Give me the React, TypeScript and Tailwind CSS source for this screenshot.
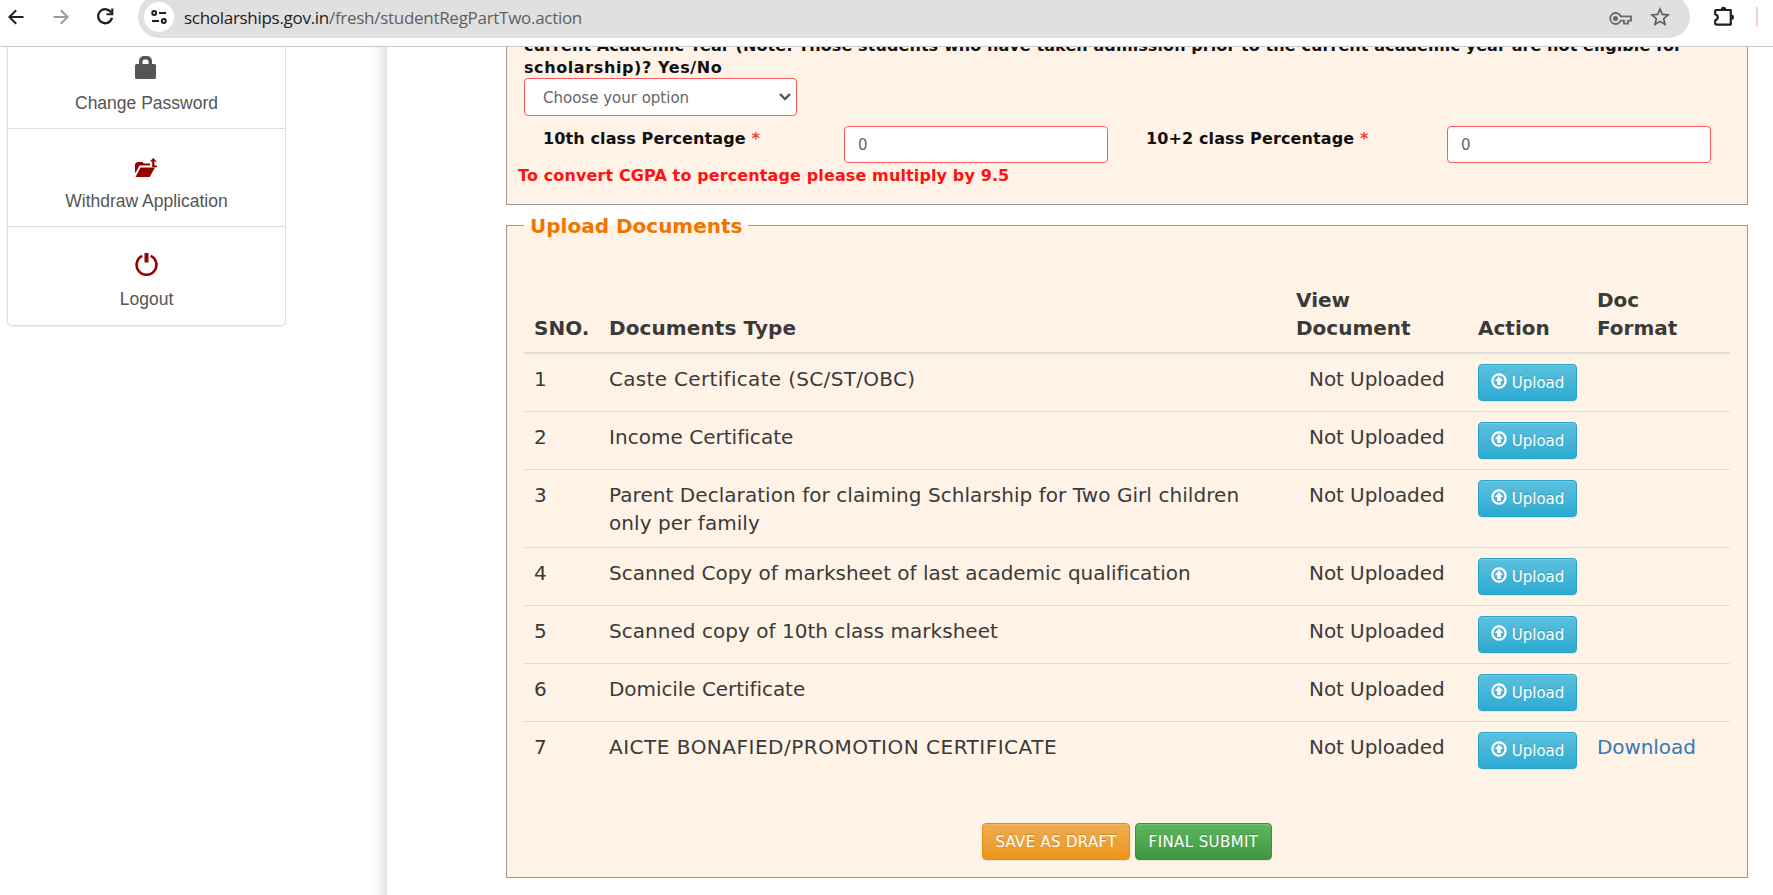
import type { ReactNode } from "react";
import { MdStarBorder } from "react-icons/md";

const documents = [
  { name: "Caste Certificate (SC/ST/OBC)", tracking: "tracking-[0.32px]" },
  { name: "Income Certificate", tracking: "tracking-[0.03px]" },
  {
    name: "Parent Declaration for claiming Schlarship for Two Girl children only per family",
    tracking: "tracking-[0.06px]",
  },
  { name: "Scanned Copy of marksheet of last academic qualification", tracking: "tracking-[-0.02px]" },
  { name: "Scanned copy of 10th class marksheet", tracking: "tracking-[0.03px]" },
  { name: "Domicile Certificate", tracking: "tracking-[-0.06px]" },
  { name: "AICTE BONAFIED/PROMOTION CERTIFICATE", tracking: "tracking-[0.5px]", download: true },
];

function ArrowIcon({ forward }: { forward?: boolean }) {
  return (
    <svg width="16" height="16" viewBox="0 0 16 16" fill="none" stroke={forward ? "#9b9c9e" : "#1f2023"} strokeWidth="2">
      <path d={forward ? "M.5 8h13.500M7.800 1.200L14.600 8l-6.800 6.800" : "M15.500 8H2M8.200 1.200L1.400 8l6.800 6.800"} />
    </svg>
  );
}

function ReloadIcon() {
  return (
    <svg width="17" height="17" viewBox="0 0 17 17" fill="none" stroke="#1f2023" strokeWidth="2.300">
      <path d="M14.300 4.800A7 7 0 1 0 15 9.800" />
      <path d="M15.300.5v5.700H9.500" strokeWidth="2.100" />
    </svg>
  );
}

function TuneIcon() {
  return (
    <svg width="16" height="14" viewBox="0 0 16 14" fill="none" stroke="#1f2023" strokeWidth="2">
      <circle cx="3.2" cy="3" r="2" />
      <path d="M8 3h7M1 11h7" />
      <circle cx="12.8" cy="11" r="2" />
    </svg>
  );
}

function KeyIcon() {
  return (
    <svg width="23" height="13" viewBox="0 0 23 13" fill="none" stroke="#66676a" strokeWidth="1.800">
      <path d="M11.700 4.300A5.500 5.500 0 1 0 11.700 8.700H15V11.700H19V8.700H22V4.300z" strokeLinejoin="round" />
      <circle cx="6.500" cy="6.500" r="2.500" fill="#66676a" stroke="none" />
    </svg>
  );
}

function PuzzleIcon() {
  return (
    <svg width="22" height="22" viewBox="0 0 22 22">
      <path
        d="M3.2 4h14.6v14.6H3.2q-1 0-1-1v-3.4q2.6-.8 2.6-3t-2.600-3V5q0-1 1-1z"
        fill="none"
        stroke="#1f2023"
        strokeWidth="2.2"
        strokeLinejoin="round"
      />
      <path d="M7.800 3.500a2.700 2.700 0 0 1 5.400 0zM18.300 8.600a2.700 2.700 0 0 1 0 5.400z" fill="#1f2023" />
    </svg>
  );
}

function LockIcon() {
  return (
    <svg width="21" height="23" viewBox="0 0 21 23" fill="#555" className="mr-[2px] mb-[2px]">
      <path
        fillRule="evenodd"
        d="M4 8V5.500Q4 0 9.500 0h2Q17 0 17 5.500V8h2.500Q21 8 21 9.500v12q0 1.500-1.500 1.500h-18Q0 23 0 21.500v-12Q0 8 1.500 8zm3.500 0h6V5.500q0-2-2-2h-2q-2 0-2 2z"
      />
    </svg>
  );
}

function FolderIcon() {
  return (
    <svg width="23" height="20" viewBox="0 0 23 20" fill="#900" className="mt-[2px]">
      <path d="M0 15V6L2 4h5.500l1.300 1.500H15v2H4.500L1 14z" />
      <path d="M5.500 9.500H20L14.700 19H.5z" />
      <path d="M18.200 0l3.500 3.600h-2.300v4h2.600v1.700h-4.800V3.600h-2.400z" />
    </svg>
  );
}

function PowerIcon() {
  return (
    <svg width="23" height="23" viewBox="0 0 23 23">
      <path d="M7.300 2.900a9.900 9.900 0 1 0 8.400 0" fill="none" stroke="#900" strokeWidth="2.600" />
      <path d="M9.500 0h4v9.500h-4z" fill="#900" />
    </svg>
  );
}

function UploadIcon() {
  return (
    <svg width="16" height="16" viewBox="0 0 16 16" fill="white" className="shrink-0">
      <circle cx="8" cy="8" r="6.600" fill="none" stroke="white" strokeWidth="2.200" />
      <path d="M8 3.300l4.100 4.700H9.800v4H6.200V8H3.900z" />
    </svg>
  );
}

function SideItem({ icon, label, last }: { icon: ReactNode; label: string; last?: boolean }) {
  return (
    <a
      className={
        last
          ? "flex h-[98px] flex-col items-center pt-[26px]"
          : "flex h-[98px] flex-col items-center border-b border-[#ddd] pt-[26px]"
      }
    >
      <span className="flex h-[23px] items-center">{icon}</span>
      <span className="mt-[13px] text-[17.5px] leading-[20px] text-[#555]">{label}</span>
    </a>
  );
}

const buttonBase =
  "flex h-[37px] items-center justify-center rounded-[4px] border text-[15px] text-white [text-shadow:0_-1px_0_rgba(0,0,0,.2)] shadow-[inset_0_1px_0_rgba(255,255,255,.15),0_1px_1px_rgba(0,0,0,.075)]";

function UploadButton() {
  return (
    <button className={`${buttonBase} w-[99px] gap-[5px] border-[#28a4c9] bg-linear-to-b from-[#5bc0de] to-[#2aabd2]`}>
      <span className="pb-[3px]">
        <UploadIcon />
      </span>
      <span className="pt-[1px]">Upload</span>
    </button>
  );
}

function Percentage({ label }: { label: string }) {
  return (
    <div className="flex">
      <div className="w-[301px] pt-[1px] text-[16px] leading-[23px] font-bold tracking-[0.12px]">
        {label} <span className="text-[#f44336]">*</span>
      </div>
      <div className="flex h-[37px] w-[264px] items-center rounded-[4px] border border-[#ff5a5a] bg-white px-[13px] pt-[2px] text-[15px] text-[#666]">
        0
      </div>
    </div>
  );
}

export default function App() {
  return (
    <div className="flex h-[895px] w-[1773px] flex-col overflow-hidden bg-white font-['DejaVu_Sans',sans-serif]">
      <header className="flex h-[47px] shrink-0 items-start overflow-hidden border-b border-[#c8c8c8] bg-white">
        <div className="flex w-[138px] shrink-0 items-center pt-[8px] pl-[8px]">
          <ArrowIcon />
          <span className="ml-[29px]">
            <ArrowIcon forward />
          </span>
          <span className="ml-[28px]">
            <ReloadIcon />
          </span>
        </div>
        <div className="-mt-[5px] flex h-[43px] w-[1552px] shrink-0 items-center rounded-full bg-[#e0e0e0] pl-[6px]">
          <span className="flex size-[30px] items-center justify-center rounded-full bg-white">
            <TuneIcon />
          </span>
          <span className="ml-[10px] grow pt-[2px] font-['Open_Sans',sans-serif] text-[17px] tracking-[-0.29px] whitespace-nowrap text-[#5f6063]">
            <span className="text-[#1f2023]">scholarships.gov.in</span>/fresh/studentRegPartTwo.action
          </span>
          <span className="mt-[3px]">
            <KeyIcon />
          </span>
          <MdStarBorder className="mt-px mr-[18px] ml-[16px] size-[24px] text-[#5a5b5e]" />
        </div>
        <div className="ml-[23px] flex items-center pt-[6px]">
          <PuzzleIcon />
          <span className="ml-[21px] h-[20px] w-[2px] bg-[#f8cfe0]" />
        </div>
      </header>

      <div className="flex min-h-0 grow overflow-hidden">
        <aside className="w-[386px] shrink-0 overflow-hidden bg-linear-to-l from-[#e6e6e6] via-[#fafafa] via-[10px] to-white to-[20px] pl-[7px] font-['Liberation_Sans',sans-serif]">
          <nav className="-mt-[17px] w-[279px] rounded-[5px] border border-[#ddd] bg-white shadow-[0_1px_2px_rgba(0,0,0,.07)]">
            <SideItem icon={<LockIcon />} label="Change Password" />
            <SideItem icon={<FolderIcon />} label="Withdraw Application" />
            <SideItem icon={<PowerIcon />} label="Logout" last />
          </nav>
        </aside>

        <main className="grow overflow-hidden border-l border-[#ddd] pl-[119px]">
          <section className="h-[158px] w-[1242px] overflow-hidden border border-t-0 border-[#999] bg-[#fff2e6] text-[#111]">
            <div className="-mt-[13px] pl-[17px] text-[16px] font-bold whitespace-nowrap">
              <p className="leading-[23px] tracking-[0.09px]">
                current Academic Year (Note: Those students who have taken admission prior to the current academic year
                are not eligible for
              </p>
              <p className="leading-[22px] tracking-[0.6px]">scholarship)? Yes/No</p>
            </div>
            <div className="-mt-px ml-[17px] flex h-[38px] w-[273px] items-center justify-between rounded-[4px] border border-[#ff5a5a] bg-white pr-[5px] pl-[18px] text-[15px] text-[#666]">
              <span className="pt-[2px]">Choose your option</span>
              <svg width="12" height="8" viewBox="0 0 12 8" fill="none" stroke="#555" strokeWidth="2.400">
                <path d="M1 1l5 5 5-5" />
              </svg>
            </div>
            <div className="mt-[10px] ml-[36px] flex gap-[38px]">
              <Percentage label="10th class Percentage" />
              <Percentage label="10+2 class Percentage" />
            </div>
            <p className="mt-[3px] pl-[11px] text-[16px] leading-[20px] font-bold tracking-[0.12px] text-[#f11]">
              To convert CGPA to percentage please multiply by 9.5
            </p>
          </section>

          <fieldset className="mt-[6px] h-[667px] w-[1242px] border border-[#999] bg-[#fff2e6] px-[17px] text-[#3a3a3a]">
            <legend className="w-[224px] pt-[1px] pl-[6px] text-[20px] leading-[28px] font-bold whitespace-nowrap text-[#ee7600]">
              Upload Documents
            </legend>
            <table className="mt-[46px] w-[1206px] table-fixed border-collapse text-[20px] leading-[28px]">
              <colgroup>
                <col className="w-[75px]" />
                <col className="w-[688px]" />
                <col className="w-[181px]" />
                <col className="w-[119px]" />
                <col className="w-[143px]" />
              </colgroup>
              <thead>
                <tr className="border-b-2 border-[#ddd] text-left align-bottom">
                  <th className="px-[10px] pb-[10px]">SNO.</th>
                  <th className="px-[10px] pb-[10px] tracking-[0.1px]">Documents Type</th>
                  <th className="px-[9px] pb-[10px]">
                    View
                    <br />
                    Document
                  </th>
                  <th className="px-[10px] pb-[10px]">Action</th>
                  <th className="px-[10px] pb-[10px]">
                    Doc
                    <br />
                    Format
                  </th>
                </tr>
              </thead>
              <tbody>
                {documents.map((doc, i) => (
                  <tr key={doc.name} className="border-b border-[#ddd] align-top last:border-b-0">
                    <td className="px-[10px] pt-[11px] pb-[10px]">{i + 1}</td>
                    <td className={`px-[10px] pt-[11px] pb-[10px] ${doc.tracking}`}>{doc.name}</td>
                    <td className="pt-[11px] pl-[22px] tracking-[-0.08px] whitespace-nowrap">Not Uploaded</td>
                    <td className="px-[10px] py-[10px]">
                      <UploadButton />
                    </td>
                    <td className="px-[10px] pt-[11px] tracking-[-0.08px] text-[#337ab7]">
                      {doc.download && "Download"}
                    </td>
                  </tr>
                ))}
              </tbody>
            </table>
            <div className="mt-[44px] flex justify-center gap-[5px]">
              <button
                className={`${buttonBase} w-[148px] border-[#e38d13] bg-linear-to-b from-[#f0ad4e] to-[#eb9316] pt-[2px] tracking-[0.3px]`}
              >
                SAVE AS DRAFT
              </button>
              <button
                className={`${buttonBase} w-[137px] border-[#3e8f3e] bg-linear-to-b from-[#5cb85c] to-[#419641] pt-[2px] tracking-[0.4px]`}
              >
                FINAL SUBMIT
              </button>
            </div>
          </fieldset>
        </main>
      </div>
    </div>
  );
}
